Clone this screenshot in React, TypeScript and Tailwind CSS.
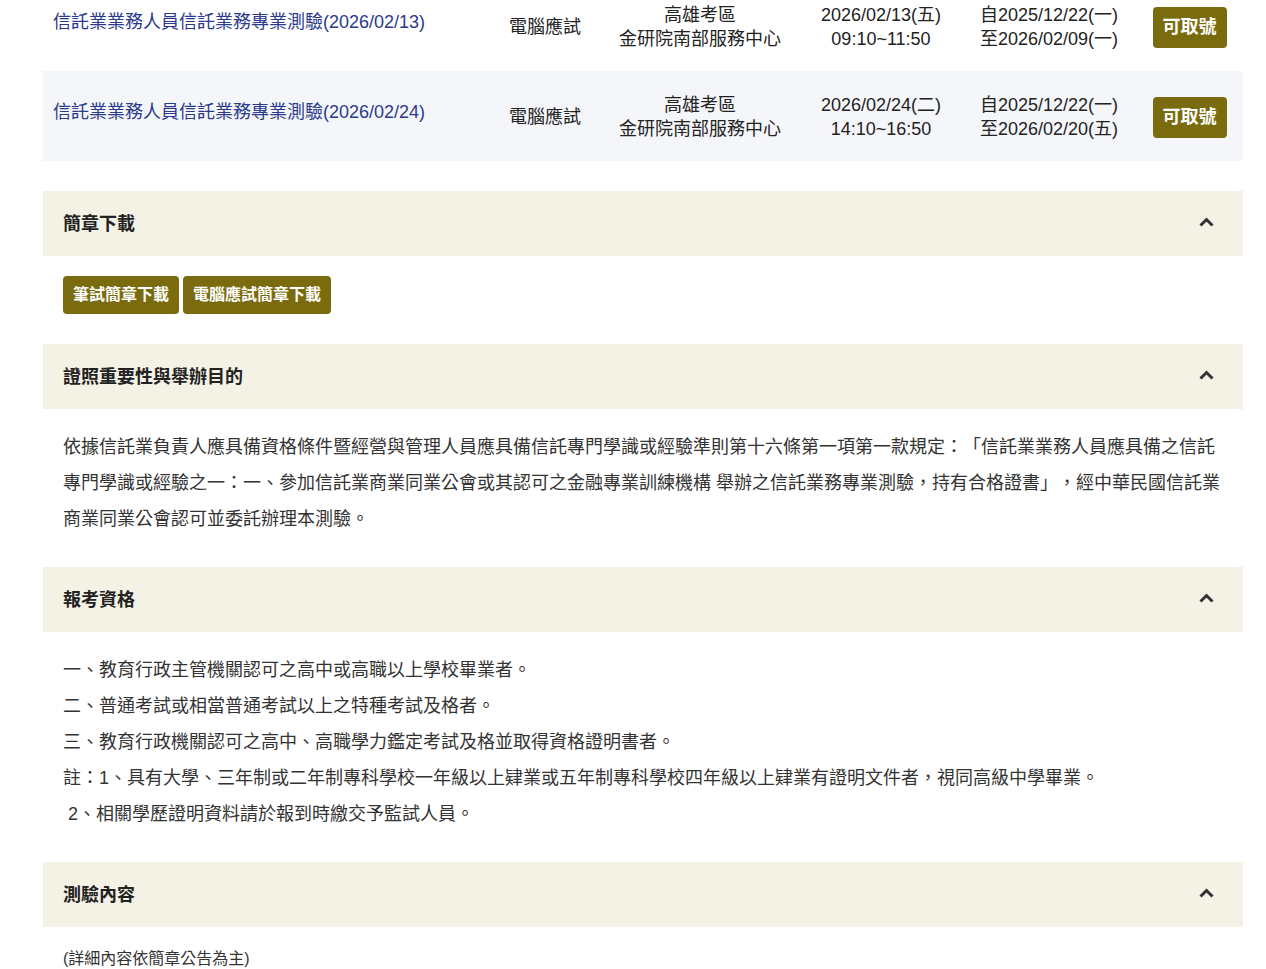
import React from 'react';

const FONT = { fontFamily: '"Liberation Sans", "Noto Sans CJK TC", sans-serif' };

type Session = {
  name: string;
  mode: string;
  place: string[];
  date: string[];
  signup: string[];
  shaded?: boolean;
};

const sessions: Session[] = [
  {
    name: '信託業業務人員信託業務專業測驗(2026/02/13)',
    mode: '電腦應試',
    place: ['高雄考區', '金研院南部服務中心'],
    date: ['2026/02/13(五)', '09:10~11:50'],
    signup: ['自2025/12/22(一)', '至2026/02/09(一)'],
  },
  {
    name: '信託業業務人員信託業務專業測驗(2026/02/24)',
    mode: '電腦應試',
    place: ['高雄考區', '金研院南部服務中心'],
    date: ['2026/02/24(二)', '14:10~16:50'],
    signup: ['自2025/12/22(一)', '至2026/02/20(五)'],
    shaded: true,
  },
];

const ChevronUp = () => (
  <svg width="15" height="10" viewBox="0 0 15 10" className="mb-1 shrink-0">
    <polyline points="1.5,8.5 7.5,2.5 13.5,8.5" fill="none" stroke="#333" strokeWidth="3" />
  </svg>
);

const SectionHeader = ({ title }: { title: string }) => (
  <div className="flex h-[65px] items-center justify-between bg-[#f4f1e5] pl-5 pr-[29px]">
    <h3 className="pt-[2px] text-[18px] font-bold text-[#222]">{title}</h3>
    <ChevronUp />
  </div>
);

const SessionRow = ({ s }: { s: Session }) => (
  <div
    className={`grid h-[90px] grid-cols-[447px_110px_200px_162px_174px_107px] items-center pt-[2px] text-[18px] leading-6 text-[#222] ${
      s.shaded ? 'bg-[#f5f6fa]' : 'bg-white'
    }`}
  >
    <a className="pb-[10px] pl-[10px] text-[#2a3a8c]">{s.name}</a>
    <div className="text-center">{s.mode}</div>
    <div className="text-center">
      {s.place.map((l) => (
        <div key={l}>{l}</div>
      ))}
    </div>
    <div className="text-center">
      {s.date.map((l) => (
        <div key={l}>{l}</div>
      ))}
    </div>
    <div className="text-center">
      {s.signup.map((l) => (
        <div key={l}>{l}</div>
      ))}
    </div>
    <div className="flex justify-center">
      <button className="h-[41px] rounded-[4px] bg-[#7a6c0e] px-[10px] text-[18px] font-bold text-white">
        可取號
      </button>
    </div>
  </div>
);

export default function App() {
  return (
    <div className="min-h-screen overflow-hidden bg-white [text-spacing-trim:space-all]" style={FONT}>
      <div className="ml-[43px] mt-[-19px] w-[1200px] pb-10">
        {sessions.map((s) => (
          <SessionRow key={s.name} s={s} />
        ))}

        <div className="mt-[30px]">
          <SectionHeader title="簡章下載" />
          <div className="flex gap-1 px-5 pb-[30px] pt-5">
            <button className="h-[38px] rounded-[4px] bg-[#7a6c0e] px-[10px] text-[16px] font-bold text-white">
              筆試簡章下載
            </button>
            <button className="h-[38px] rounded-[4px] bg-[#7a6c0e] px-[10px] text-[16px] font-bold text-white">
              電腦應試簡章下載
            </button>
          </div>
        </div>

        <SectionHeader title="證照重要性與舉辦目的" />
        <p className="px-5 pb-[30px] pt-5 text-[18px] leading-9 text-[#333]">
          依據信託業負責人應具備資格條件暨經營與管理人員應具備信託專門學識或經驗準則第十六條第一項第一款規定：「信託業業務人員應具備之信託專門學識或經驗之一：一、參加信託業商業同業公會或其認可之金融專業訓練機構 舉辦之信託業務專業測驗，持有合格證書」，經中華民國信託業商業同業公會認可並委託辦理本測驗。
        </p>

        <SectionHeader title="報考資格" />
        <div className="px-5 pb-[30px] pt-5 text-[18px] leading-9 text-[#333]">
          <div>一、教育行政主管機關認可之高中或高職以上學校畢業者。</div>
          <div>二、普通考試或相當普通考試以上之特種考試及格者。</div>
          <div>三、教育行政機關認可之高中、高職學力鑑定考試及格並取得資格證明書者。</div>
          <div>註：1、具有大學、三年制或二年制專科學校一年級以上肄業或五年制專科學校四年級以上肄業有證明文件者，視同高級中學畢業。</div>
          <div>{'\u00a0'}2、相關學歷證明資料請於報到時繳交予監試人員。</div>
        </div>

        <SectionHeader title="測驗內容" />
        <div className="px-5 pb-[30px] pt-[14px] text-[16px] leading-9 text-[#333]">
          (詳細內容依簡章公告為主)
        </div>
      </div>
    </div>
  );
}
